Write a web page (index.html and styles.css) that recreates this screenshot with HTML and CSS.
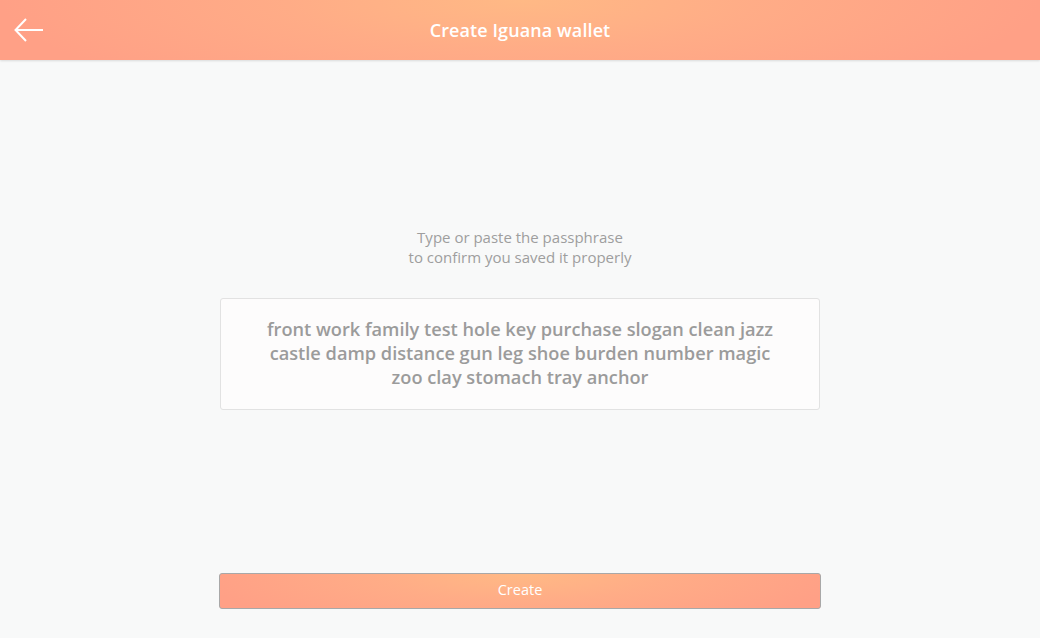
FILE: index.html
```html
<!DOCTYPE html>
<html>
<head>
<meta charset="utf-8">
<link rel="stylesheet" href="styles.css">
</head>
<body>
<header class="topbar">
  <button class="back" aria-label="Back">
    <svg width="30" height="24" viewBox="0 0 30 24"><path d="M29 12H2M12 1L1.5 12L12 23" fill="none" stroke="#fff" stroke-width="2"/></svg>
  </button>
  <h1 class="title">Create Iguana wallet</h1>
</header>
<main class="content">
  <p class="hint">Type or paste the passphrase<br>to confirm you saved it properly</p>
  <div class="phrase">front work family test hole key purchase slogan clean jazz castle damp distance gun leg shoe burden number magic zoo clay stomach tray anchor</div>
  <div class="spacer"></div>
  <button class="create">Create</button>
</main>
</body>
</html>
```
FILE: styles.css
```css
html, body { margin: 0; padding: 0; }
body {
  width: 1040px;
  height: 638px;
  background: #f8f9f9;
  font-family: "Open Sans", "Lato", sans-serif;
  display: flex;
  flex-direction: column;
  overflow: hidden;
}
.topbar {
  height: 60px;
  flex: 0 0 60px;
  position: relative;
  display: flex;
  align-items: center;
  justify-content: center;
  background:
    radial-gradient(ellipse 520px 110px at 50% 0%, #ffb985 0%, rgba(255,180,135,0.6) 45%, rgba(255,160,133,0) 100%),
    #ffa086;
  box-shadow: 0 1px 2px rgba(0,0,0,0.12);
}
.back {
  position: absolute;
  left: 14px;
  top: 18px;
  background: none;
  border: 0;
  padding: 0;
  width: 30px;
  height: 24px;
  cursor: pointer;
}
.back svg { display: block; }
.title {
  margin: 0;
  color: #fff;
  font-size: 18px;
  font-weight: 600;
  letter-spacing: 0.1px;
}
.content {
  flex: 1;
  display: flex;
  flex-direction: column;
  align-items: center;
}
.hint {
  margin: 167px 0 0;
  text-align: center;
  color: #9e9e9e;
  font-size: 15px;
  line-height: 20px;
}
.phrase {
  margin-top: 31px;
  box-sizing: border-box;
  width: 600px;
  height: 112px;
  background: #fdfcfc;
  border: 1px solid #e2e2e2;
  border-radius: 3px;
  padding: 18px 42px 0;
  text-align: center;
  color: #9b9b9b;
  font-size: 18.2px;
  font-weight: 600;
  line-height: 24px;
}
.spacer { flex: 1; }
.create {
  margin-bottom: 29px;
  width: 602px;
  height: 36px;
  padding: 0 0 3px;
  border: 1px solid #a8a8a8;
  border-radius: 3px;
  background:
    radial-gradient(ellipse 320px 60px at 50% 0%, #ffb985 0%, rgba(255,180,135,0.6) 45%, rgba(255,160,133,0) 100%),
    #ffa086;
  color: #fff;
  font-family: "Open Sans", sans-serif;
  font-size: 14.5px;
  line-height: 20px;
  cursor: pointer;
}
```
